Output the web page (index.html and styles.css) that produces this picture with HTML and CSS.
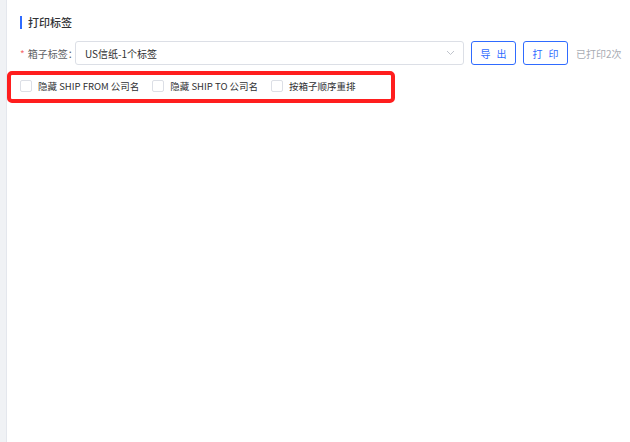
FILE: index.html
```html
<!DOCTYPE html>
<html lang="zh-CN">
<head>
    <meta charset="UTF-8">
    <meta name="viewport" content="width=device-width, initial-scale=1.0">
    <title>打印标签</title>
    <link rel="stylesheet" href="styles.css">
</head>
<body>
    <div class="page">
        <div class="side"></div>
        <div class="main">
            <div class="title">打印标签</div>

            <div class="form-row">
                <label class="form-label"><span class="required">*</span>箱子标签：</label>
                <div class="select">
                    <span class="select-value">US信纸-1个标签</span>
                    <svg class="chevron" width="9" height="6" viewBox="0 0 9 6">
                        <path d="M1 1 L4.5 4.5 L8 1" fill="none" stroke="#c0c4cc" stroke-width="1"/>
                    </svg>
                </div>
                <button type="button" class="button">导 出</button>
                <button type="button" class="button">打 印</button>
                <span class="print-count">已打印2次</span>
            </div>

            <div class="options">
                <label class="check"><span class="box"></span>隐藏 SHIP FROM 公司名</label>
                <label class="check"><span class="box"></span>隐藏 SHIP TO 公司名</label>
                <label class="check"><span class="box"></span>按箱子顺序重排</label>
            </div>
        </div>
    </div>
</body>
</html>
```

FILE: styles.css
```css
body {
    margin: 0;
    padding: 0;
    font-family: "Noto Sans CJK SC", "Noto Sans", sans-serif;
    font-size: 10px;
    color: #333;
    background: #fff;
    white-space: nowrap;
}
.page {
    display: flex;
    height: 100vh;
}
.side {
    width: 6px;
    flex-shrink: 0;
    background: #f0f2f5;
    border-right: 1px solid #e4e7ed;
}
.main {
    flex: 1;
    padding: 16px 13px;
}
.title {
    height: 13px;
    line-height: 13px;
    border-left: 2px solid #2f6bff;
    padding-left: 6px;
    font-size: 11px;
    font-weight: 500;
    color: #303133;
}
.form-row {
    display: flex;
    align-items: center;
    margin-top: 12px;
    height: 24px;
}
.form-label {
    width: 55px;
    flex-shrink: 0;
    color: #606266;
}
.required {
    color: #f56c6c;
    margin-right: 3px;
}
.select {
    box-sizing: border-box;
    width: 389px;
    flex-shrink: 0;
    height: 24px;
    border: 1px solid #dcdfe6;
    border-radius: 3px;
    display: flex;
    align-items: center;
    justify-content: space-between;
    padding: 0 8px 0 9px;
}
.select-value {
    color: #303133;
}
.button {
    box-sizing: border-box;
    flex-shrink: 0;
    height: 24px;
    width: 45px;
    margin-left: 7px;
    background: #fff;
    color: #2f6bff;
    border: 1px solid #2f6bff;
    border-radius: 3px;
    font-family: inherit;
    font-size: 10px;
    letter-spacing: 2px;
    padding: 0 0 0 2px;
    cursor: pointer;
}
.print-count {
    margin-left: 8px;
    color: #a8abb2;
}
.options {
    position: relative;
    display: flex;
    align-items: center;
    height: 20px;
    margin-top: 11px;
    font-size: 9.5px;
}
.options::after {
    content: '';
    position: absolute;
    left: -13px;
    top: -5px;
    width: 388px;
    height: 32px;
    box-sizing: border-box;
    border: 4px solid #ff1e1e;
    border-radius: 5px;
}
.check {
    display: flex;
    align-items: center;
    margin-right: 13px;
    color: #303133;
}
.box {
    width: 12px;
    height: 12px;
    box-sizing: border-box;
    border: 1px solid #dcdfe6;
    border-radius: 2px;
    margin-right: 6px;
}
```
